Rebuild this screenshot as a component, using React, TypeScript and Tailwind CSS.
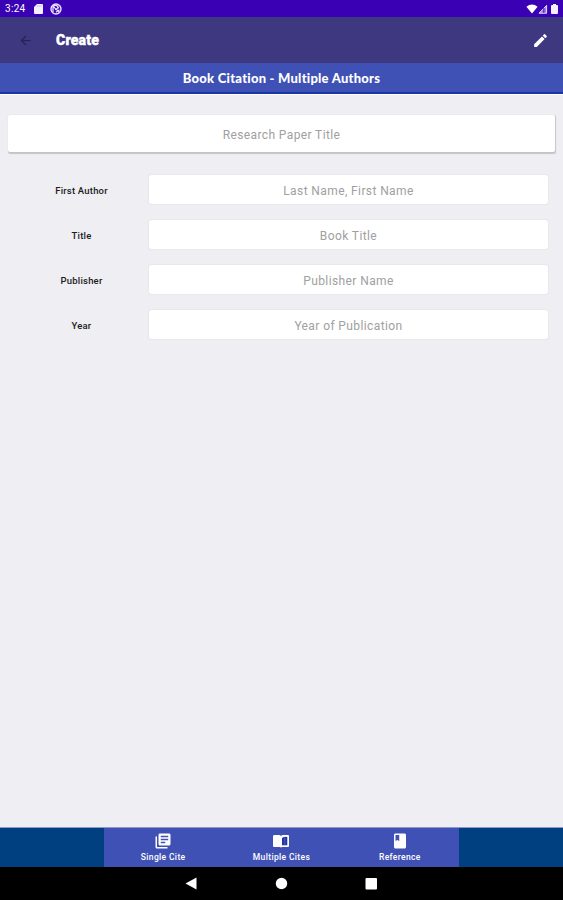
import React from "react";
import { MdArrowBack, MdEdit, MdLibraryBooks, MdBook } from "react-icons/md";

type FieldProps = { label: string; placeholder: string };

const fields: FieldProps[] = [
  { label: "First Author", placeholder: "Last Name, First Name" },
  { label: "Title", placeholder: "Book Title" },
  { label: "Publisher", placeholder: "Publisher Name" },
  { label: "Year", placeholder: "Year of Publication" },
];

function StatusBar() {
  return (
    <div className="flex h-[17px] items-center justify-between bg-[#3a00b3] pl-[5px] pr-[5px] pt-[1px] text-white">
      <div className="flex items-center">
        <span className="w-[29px] text-[10px] leading-none tracking-[0.3px]">3:24</span>
        <svg width="9" height="10" viewBox="0 0 9 10" fill="#f4efff">
          <path d="M3 0h5q1 0 1 1v8q0 1-1 1H1q-1 0-1-1V3z" />
          <path d="M3.5 1.3v1.6M5.2 1.3v1.6M7 1.3v1.6" stroke="#b9a3e8" strokeWidth=".7" />
        </svg>
        <svg className="ml-[7px]" width="12" height="12" viewBox="0 0 12 12" fill="none" stroke="#e9dfff">
          <circle cx="6" cy="6" r="5" strokeWidth="1.4" />
          <path d="M3 9V5.2a2.5 2.5 0 0 1 5-.5M2.4 2.6l7.2 7M5 6.7l4-2.2M6 9.2l3.5-2.5" strokeWidth="1.3" />
        </svg>
      </div>
      <div className="flex items-center">
        <svg width="12" height="10" viewBox="0 0 12 10" fill="#fff">
          <path d="M6 9.5.4 2.7Q6-1.8 11.6 2.7z" />
        </svg>
        <svg width="10" height="10" viewBox="0 0 10 10">
          <path d="M1 9.2 8.6 1.4V9.2z" fill="#9a80dc" stroke="#e9dfff" />
          <path d="M5.8 4v5" stroke="#4a18b8" />
        </svg>
        <svg className="ml-[3px]" width="7" height="10" viewBox="0 0 7 10" fill="#f4efff">
          <path d="M2 0h3v1h1q1 0 1 1v7q0 1-1 1H1q-1 0-1-1V2q0-1 1-1h1z" />
        </svg>
      </div>
    </div>
  );
}

function Field({ label, placeholder }: FieldProps) {
  return (
    <div className="flex h-[29px] items-center">
      <div className="w-[149px] pl-[14px] pt-[2px] text-center text-[9.5px] font-medium leading-none tracking-[0.2px] text-[#1c1c22]">
        {label}
      </div>
      <div className="flex h-[29px] w-[399px] items-center justify-center rounded-[3px] bg-white pt-[2px] text-[12px] tracking-[0.4px] text-[#a0a0a0] shadow-[0_0_1px_1px_#e8e8ec]">
        {placeholder}
      </div>
    </div>
  );
}

function OpenBook() {
  return (
    <svg width="18" height="18" viewBox="0 0 18 18" fill="none">
      <path d="M1 4.2Q1 3.200 2 3H7Q8.500 3 9 4.200Q9.500 3 11 3H16Q17 3 17 4.200V14Q17 15 16 15H10L9 15.600L8 15H2Q1 15 1 14z" fill="#fff" />
      <path d="M10 6Q12.500 4.200 15.300 5V13.300H10z" fill="#2634a4" />
      <path d="M12.800 5v8.300" stroke="#5968c2" strokeWidth=".8" />
    </svg>
  );
}

function Tab({ icon, label }: { icon: React.ReactNode; label: string }) {
  return (
    <div className="flex flex-1 flex-col items-center pt-[4px] text-white">
      {icon}
      <span className="mt-[2px] text-[8.5px] font-medium leading-[10px] tracking-[0.35px]">{label}</span>
    </div>
  );
}

export default function App() {
  return (
    <div className="flex h-[900px] w-[563px] flex-col overflow-hidden bg-[#eeeef3] font-['Roboto',sans-serif]">
      <StatusBar />
      <header className="flex h-[46px] items-center bg-[#3e3880]">
        <MdArrowBack size={15} className="ml-[18px] text-[#28234f]" />
        <h1 className="ml-[23px] flex-1 text-[14px] font-black leading-none tracking-[0.2px] text-white [-webkit-text-stroke:0.4px_white]">Create</h1>
        <MdEdit size={17} className="mr-[14px] text-white" />
      </header>
      <div className="flex h-[31px] items-center justify-center border-b-2 border-[#1a36a6] bg-[#4051b5] pt-[2px] font-['Lato',sans-serif] text-[13px] font-black tracking-[0.24px] text-white [font-variant-ligatures:none]">
        Book Citation - Multiple Authors
      </div>
      <main className="flex-1 border-t border-white">
        <div className="ml-[8px] mt-[20px] flex h-[37px] w-[547px] items-center justify-center rounded-[2px] bg-white pt-[2px] text-[12px] tracking-[0.39px] text-[#a0a0a0] shadow-[0.5px_1px_1px_0.5px_#c5c5c9]">
          Research Paper Title
        </div>
        <div className="mt-[23px] flex flex-col gap-[16px]">
          {fields.map((f) => (
            <Field key={f.label} {...f} />
          ))}
        </div>
      </main>
      <nav className="flex h-[40px] justify-center border-t border-[#8f98cc] bg-[#004080]">
        <div className="flex w-[355px] bg-[#4051b5]">
          <Tab icon={<MdLibraryBooks size={18} />} label="Single Cite" />
          <Tab icon={<OpenBook />} label="Multiple Cites" />
          <Tab icon={<MdBook size={18} />} label="Reference" />
        </div>
      </nav>
      <div className="flex h-[33px] items-center justify-center bg-black">
        <svg className="mr-[2px]" width="192" height="13" viewBox="0 0 192 13" fill="#fff">
          <path d="M.5 6.5 11.5.5v12z" />
          <circle cx="96.5" cy="6.5" r="5.7" />
          <rect x="180.5" y="1" width="11.5" height="11.5" rx="1" />
        </svg>
      </div>
    </div>
  );
}
